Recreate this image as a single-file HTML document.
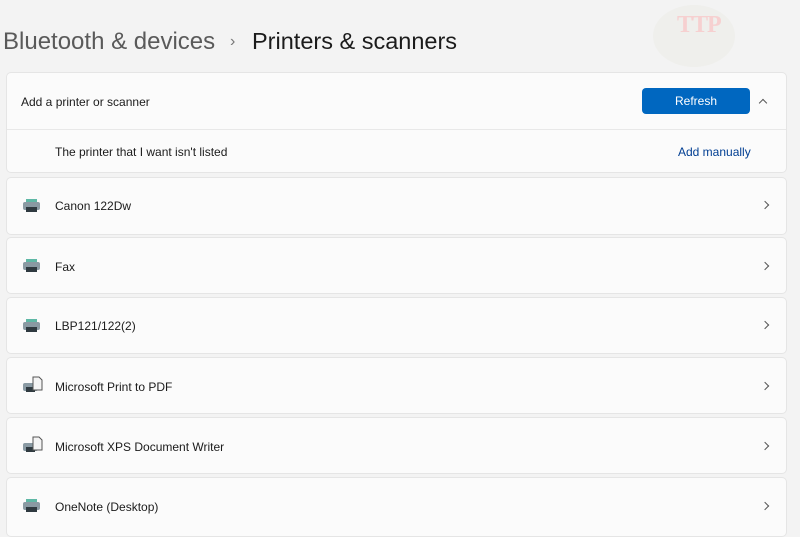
<!DOCTYPE html>
<html><head><style>
*{margin:0;padding:0;box-sizing:border-box}
body{width:800px;height:533px;overflow:hidden;background:#f3f3f3;font-family:"Liberation Sans",sans-serif;color:#1b1b1b;position:relative}
.t{position:absolute;font-size:23px;top:28px;white-space:nowrap}
.card{position:absolute;left:6px;width:781px;background:#fbfbfb;border:1px solid #e5e5e5;border-radius:5px}
.lbl{position:absolute;font-size:12px;color:#1b1b1b}
.chev{position:absolute;right:18px;width:6px;height:6px;border-right:1.2px solid #555;border-top:1.2px solid #555;transform:rotate(45deg)}
.ic{position:absolute;left:15px}
</style></head><body>
<div style="position:absolute;left:653px;top:5px;width:82px;height:62px;border-radius:50%;background:#efefec"></div>
<div style="position:absolute;left:677px;top:12px;font:bold 24px 'Liberation Serif',serif;color:#f6d0d0;letter-spacing:-1px">TTP</div>
<div class="t" style="left:3px;color:#5a5a5a;font-size:24px;top:28px">Bluetooth &amp; devices</div>
<div class="t" style="left:230px;color:#777;font-size:16px;top:33px">›</div>
<div class="t" style="left:252px;color:#1b1b1b;font-size:23.5px">Printers &amp; scanners</div>

<div class="card" style="top:72px;height:101px">
 <div class="lbl" style="left:14px;top:22px">Add a printer or scanner</div>
 <div style="position:absolute;left:635px;top:15px;width:108px;height:26px;background:#0067c0;border-radius:4px;color:#fff;font-size:12px;text-align:center;line-height:26px">Refresh</div>
 <div class="chev" style="top:27px;transform:rotate(-45deg);right:20px"></div>
 <div style="position:absolute;left:0;right:0;top:56px;border-top:1px solid #e8e8e8"></div>
 <div class="lbl" style="left:48px;top:72px">The printer that I want isn't listed</div>
 <div class="lbl" style="left:671px;top:72px;color:#003e92">Add manually</div>
</div>

<div class="card" style="top:177px;height:58px"><svg class="ic" style="top:20px" width="20" height="16"><rect x="1" y="4" width="17" height="8" rx="2" fill="#8a9aa3"/><rect x="4" y="1" width="11" height="3" fill="#5fb8a6"/><rect x="4" y="9" width="11" height="5" fill="#2f3a40"/></svg><div class="lbl" style="left:48px;top:21px">Canon 122Dw</div><div class="chev" style="top:24px"></div></div>
<div class="card" style="top:237px;height:57px"><svg class="ic" style="top:20px" width="20" height="16"><rect x="1" y="4" width="17" height="8" rx="2" fill="#8a9aa3"/><rect x="4" y="1" width="11" height="3" fill="#5fb8a6"/><rect x="4" y="9" width="11" height="5" fill="#2f3a40"/></svg><div class="lbl" style="left:48px;top:22px">Fax</div><div class="chev" style="top:25px"></div></div>
<div class="card" style="top:297px;height:57px"><svg class="ic" style="top:20px" width="20" height="16"><rect x="1" y="4" width="17" height="8" rx="2" fill="#8a9aa3"/><rect x="4" y="1" width="11" height="3" fill="#5fb8a6"/><rect x="4" y="9" width="11" height="5" fill="#2f3a40"/></svg><div class="lbl" style="left:48px;top:21px">LBP121/122(2)</div><div class="chev" style="top:24px"></div></div>
<div class="card" style="top:357px;height:57px"><svg class="ic" style="top:18px" width="22" height="18"><rect x="1" y="7" width="15" height="8" rx="2" fill="#8a9aa3"/><rect x="4" y="11" width="9" height="5" fill="#2f3a40"/><path d="M11 1h6l3 3v10h-9z" fill="#f4f4f4" stroke="#555"/></svg><div class="lbl" style="left:48px;top:22px">Microsoft Print to PDF</div><div class="chev" style="top:25px"></div></div>
<div class="card" style="top:417px;height:57px"><svg class="ic" style="top:18px" width="22" height="18"><rect x="1" y="7" width="15" height="8" rx="2" fill="#8a9aa3"/><rect x="4" y="11" width="9" height="5" fill="#2f3a40"/><path d="M11 1h6l3 3v10h-9z" fill="#f4f4f4" stroke="#555"/></svg><div class="lbl" style="left:48px;top:22px">Microsoft XPS Document Writer</div><div class="chev" style="top:25px"></div></div>
<div class="card" style="top:477px;height:60px"><svg class="ic" style="top:20px" width="20" height="16"><rect x="1" y="4" width="17" height="8" rx="2" fill="#8a9aa3"/><rect x="4" y="1" width="11" height="3" fill="#5fb8a6"/><rect x="4" y="9" width="11" height="5" fill="#2f3a40"/></svg><div class="lbl" style="left:48px;top:22px">OneNote (Desktop)</div><div class="chev" style="top:25px"></div></div>
</body></html>
